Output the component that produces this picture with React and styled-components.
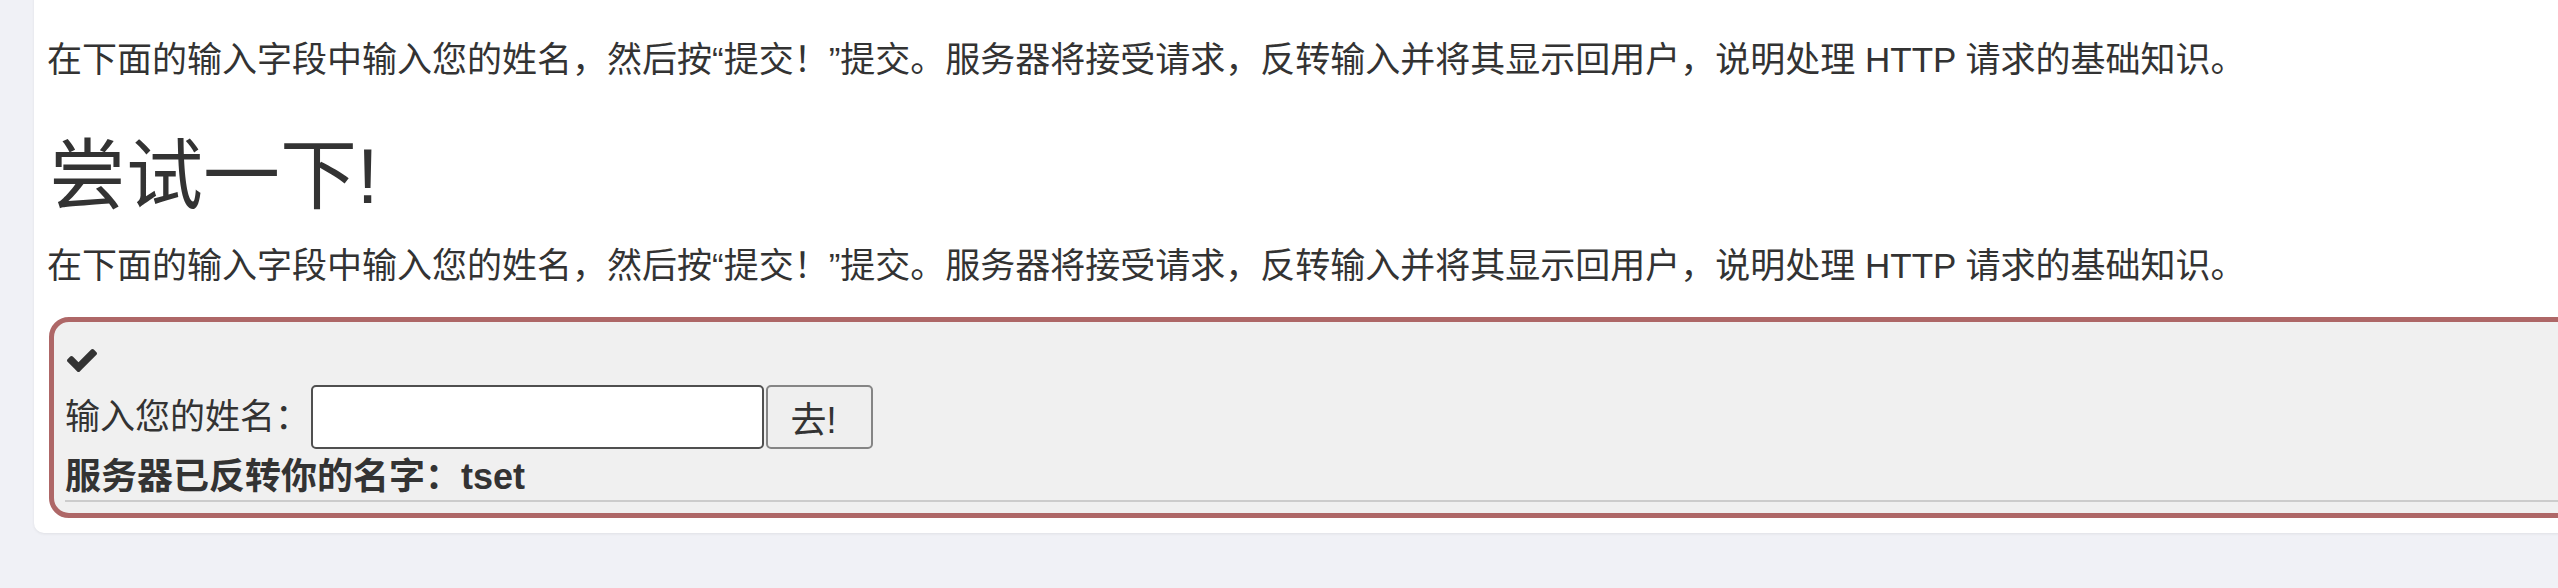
import React from "react";
import styled, { createGlobalStyle } from "styled-components";

const GlobalStyle = createGlobalStyle`
  html, body {
    margin: 0;
    padding: 0;
    background: #f0f1f6;
    overflow: hidden;
  }
  body {
    font-family: "Liberation Sans", "Noto Sans CJK SC", sans-serif;
    color: #333;
  }
`;

const intro =
  "在下面的输入字段中输入您的姓名，然后按“提交！”提交。服务器将接受请求，反转输入并将其显示回用户，说明处理 HTTP 请求的基础知识。";

function CheckIcon() {
  return (
    <svg width="30" height="23" viewBox="121 334 1550 1188">
      <path
        fill="#333"
        d="M1671 566q0 40-28 68l-724 724-136 136q-28 28-68 28t-68-28l-136-136-362-362q-28-28-28-68t28-68l136-136q28-28 68-28t68 28l294 295 656-657q28-28 68-28t68 28l136 136q28 28 28 68z"
      />
    </svg>
  );
}

export default function App() {
  return (
    <>
      <GlobalStyle />
      <Page>
        <Card>
          <Paragraph>{intro}</Paragraph>
          <Title>尝试一下!</Title>
          <Paragraph $tight>{intro}</Paragraph>

          <DemoBox>
            <IconRow>
              <CheckIcon />
            </IconRow>
            <FormRow>
              <Label htmlFor="name">输入您的姓名：</Label>
              <NameInput id="name" type="text" />
              <GoButton type="button">去!</GoButton>
            </FormRow>
            <Result>服务器已反转你的名字：tset</Result>
            <Divider />
          </DemoBox>
        </Card>
      </Page>
    </>
  );
}

const Page = styled.div`
  padding: 0 0 0 34px;
  min-height: 588px;
`;

const Card = styled.div`
  margin-top: -20px;
  margin-right: -60px;
  background: #fff;
  border-radius: 10px;
  box-shadow: 0 1px 3px rgba(0, 0, 0, 0.07);
  padding: 54px 0 15px 13px;
`;

const Paragraph = styled.p`
  margin: 0;
  font-size: 35px;
  line-height: 52px;
  white-space: nowrap;
  margin-bottom: ${(p) => (p.$tight ? "25px" : "0")};
`;

const Title = styled.h1`
  margin: 45px 0 19px;
  font-size: 77px;
  font-weight: 400;
  line-height: 90px;
  padding-left: 2px;
`;

const DemoBox = styled.div`
  margin-left: 2px;
  border: 5px solid #ae6767;
  border-radius: 20px;
  background: #f0f0f0;
  padding: 26px 0 11px 11px;
`;

const IconRow = styled.div`
  height: 24px;
  display: flex;
  align-items: center;
  padding-left: 2px;
`;

const FormRow = styled.div`
  display: flex;
  align-items: center;
  margin-top: 13px;
  height: 64px;
`;

const Label = styled.label`
  font-size: 35px;
  line-height: 64px;
  white-space: nowrap;
  width: 246px;
`;

const NameInput = styled.input`
  box-sizing: border-box;
  width: 453px;
  height: 64px;
  border: 2px solid #4f4f4f;
  border-radius: 5px;
  background: #fff;
  margin: 0 2px 0 0;
  padding: 0 8px;
  font-size: 35px;
  font-family: inherit;
`;

const GoButton = styled.button`
  box-sizing: border-box;
  width: 107px;
  height: 64px;
  border: 2px solid #858585;
  border-radius: 5px;
  background: #efefef;
  color: #333;
  font-size: 36px;
  font-family: "Liberation Sans", "Noto Sans CJK SC", sans-serif;
  padding: 0 12px 0 0;
`;

const Result = styled.div`
  font-size: 36px;
  font-weight: 700;
  line-height: 44px;
  margin-top: 6px;
  white-space: nowrap;
`;

const Divider = styled.div`
  border-top: 2px solid #cccccc;
  margin-top: 1px;
`;
